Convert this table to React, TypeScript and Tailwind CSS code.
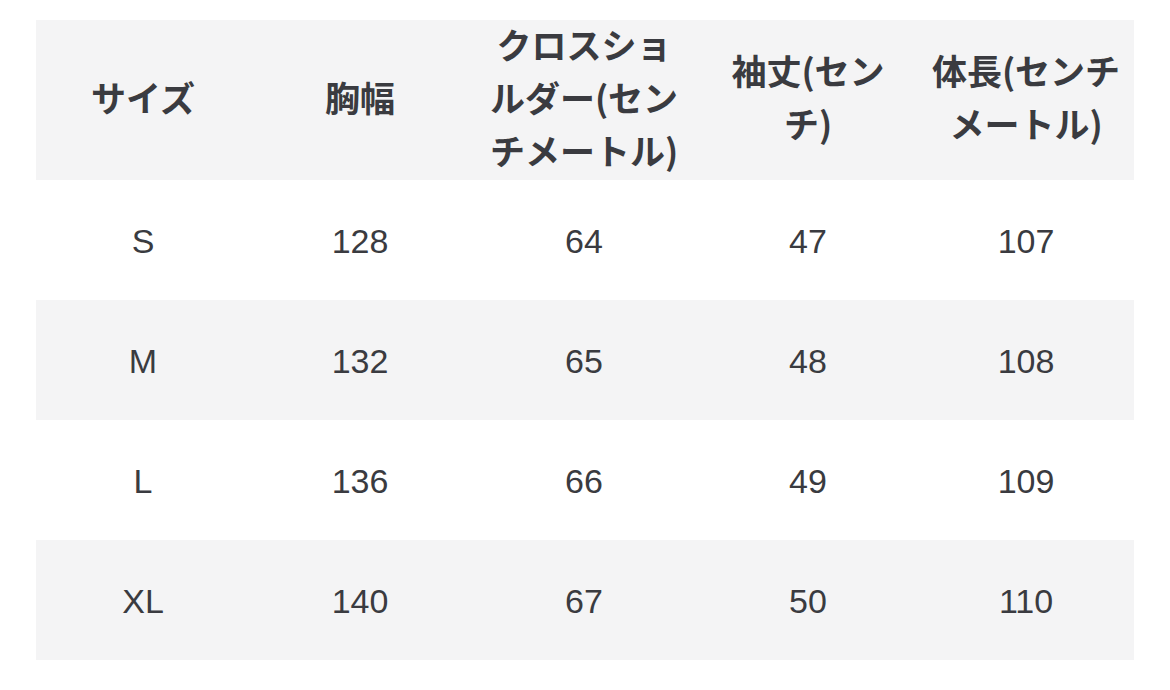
import React from "react";

const headers: React.ReactNode[] = [
  "サイズ",
  "胸幅",
  <>
    クロスショ
    <br />
    ルダー(セン
    <br />
    チメートル)
  </>,
  <>
    袖丈(セン
    <br />
    チ)
  </>,
  <>
    体長(センチ
    <br />
    メートル)
  </>,
];

const rows = [
  ["S", "128", "64", "47", "107"],
  ["M", "132", "65", "48", "108"],
  ["L", "136", "66", "49", "109"],
  ["XL", "140", "67", "50", "110"],
];

const cols = "grid grid-cols-[214px_220px_228px_220px_216px]";

export default function App() {
  return (
    <div className="min-h-[690px] w-[1170px] bg-white pt-[20px] pl-[36px] text-[#3a3b40]">
      <div className="w-[1098px]">
        <div
          className={`${cols} grid-rows-[160px] bg-[#f4f4f5] font-bold text-[35px] leading-[53px] font-['Noto_Sans_CJK_JP',sans-serif]`}
        >
          {headers.map((h, i) => (
            <div key={i} className="flex items-center justify-center pb-[8px] text-center">
              <span>{h}</span>
            </div>
          ))}
        </div>
        {rows.map((r, ri) => (
          <div
            key={ri}
            className={`${cols} h-[120px] text-[34px] font-['Liberation_Sans',Arial,sans-serif] ${
              ri % 2 === 1 ? "bg-[#f4f4f5]" : "bg-white"
            }`}
          >
            {r.map((c, ci) => (
              <div key={ci} className="flex items-center justify-center pt-[2px]">
                {c}
              </div>
            ))}
          </div>
        ))}
      </div>
    </div>
  );
}
